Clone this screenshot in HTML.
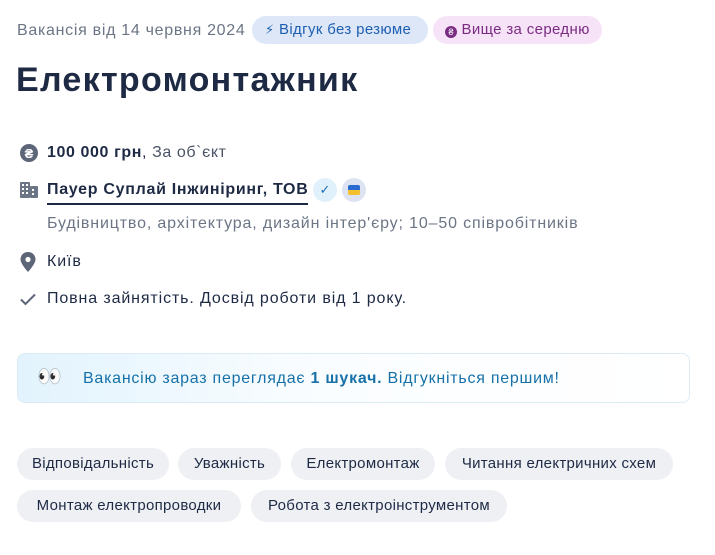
<!DOCTYPE html>
<html><head><meta charset="utf-8"><style>
body{margin:0;width:715px;height:555px;background:#fff;font-family:"Liberation Sans",sans-serif;color:#1e2a44;position:relative;overflow:hidden}
.a{position:absolute;white-space:nowrap}
.pill{position:absolute;height:28px;border-radius:14px;font-size:15px;line-height:28px;padding:0 10px;box-sizing:border-box;white-space:nowrap}
.tag{position:absolute;height:32px;border-radius:16px;background:#eef0f4;font-size:15px;line-height:32px;text-align:center;color:#1e2a44;letter-spacing:0.3px;white-space:nowrap}
.row{position:absolute;left:17px;font-size:16px;line-height:20px;letter-spacing:0.9px;white-space:nowrap}
.ic{position:absolute;left:19px}
</style></head><body>
<div class="a" style="left:17px;top:21px;font-size:16px;color:#6b7585;line-height:20px;letter-spacing:0.7px">Вакансія від 14 червня 2024</div>
<div class="pill" style="left:252px;top:16px;width:176px;background:#dde7f7;color:#1d5fb0;letter-spacing:0.35px;padding-left:13px"><span style="font-size:13px">&#x26A1;&#xFE0E;</span> Відгук без резюме</div>
<div class="pill" style="left:433px;top:16px;width:169px;background:#f7e3f7;color:#7a2c83;letter-spacing:0.35px;padding-left:12px"><span style="display:inline-block;width:12px;height:12px;border-radius:6px;background:#7a2c83;color:#fff;font-size:9px;line-height:12px;text-align:center;vertical-align:-1px;letter-spacing:0">₴</span> Вище за середню</div>
<div class="a" style="left:16px;top:58px;font-size:34px;font-weight:bold;line-height:44px;letter-spacing:1.3px;color:#1e2a44">Електромонтажник</div>

<svg class="ic" style="top:143px" width="20" height="20"><circle cx="10" cy="10" r="9" fill="#5d6678"/><text x="10" y="15" font-size="13" font-weight="bold" fill="#fff" text-anchor="middle" font-family="Liberation Sans">₴</text></svg>
<div class="row" style="left:47px;top:143px;letter-spacing:0.6px"><b>100 000 грн</b>, <span style="color:#4a5466">За об`єкт</span></div>

<svg class="ic" style="top:181px" width="20" height="18" fill="#6b7585"><rect x="1" y="1" width="10" height="16" rx="1"/><rect x="11" y="5" width="8" height="12" rx="1"/><g fill="#fff"><rect x="3" y="3" width="2" height="2"/><rect x="7" y="3" width="2" height="2"/><rect x="3" y="7" width="2" height="2"/><rect x="7" y="7" width="2" height="2"/><rect x="3" y="11" width="2" height="2"/><rect x="7" y="11" width="2" height="2"/><rect x="13" y="8" width="2" height="2"/><rect x="13" y="12" width="2" height="2"/></g></svg>
<div class="row" style="left:47px;top:180px;font-weight:bold;border-bottom:2px solid #1e2a44;padding-bottom:3px;letter-spacing:0.7px">Пауер Суплай Інжиніринг, ТОВ</div>
<div class="a" style="left:313px;top:178px;width:24px;height:24px;border-radius:12px;background:#e1f1fb;color:#1d6fb8;font-size:13px;text-align:center;line-height:24px">✓</div>
<div class="a" style="left:342px;top:178px;width:24px;height:24px;border-radius:12px;background:#dde3f2"><div style="position:absolute;left:6px;top:7px;width:12px;height:5px;background:#2b6ad1;border-radius:2px 2px 0 0"></div><div style="position:absolute;left:6px;top:12px;width:12px;height:5px;background:#f5c02d;border-radius:0 0 2px 2px"></div></div>
<div class="row" style="left:47px;top:214px;color:#6b7585;letter-spacing:0.85px">Будівництво, архітектура, дизайн інтер'єру; 10–50 співробітників</div>

<svg class="ic" style="top:251px" width="18" height="22"><path d="M9 1C4.6 1 1.5 4.2 1.5 8.4 1.5 13 9 21 9 21s7.5-8 7.5-12.6C16.5 4.2 13.4 1 9 1z" fill="#5d6678"/><circle cx="9" cy="8.5" r="2.6" fill="#fff"/></svg>
<div class="row" style="left:47px;top:252px">Київ</div>

<svg class="ic" style="top:290px" width="18" height="18"><path d="M2 9.5l4.5 4.5L16 4.5" stroke="#5d6678" stroke-width="2" fill="none"/></svg>
<div class="row" style="left:47px;top:289px;letter-spacing:0.88px">Повна зайнятість. Досвід роботи від 1 року.</div>

<div class="a" style="left:17px;top:353px;width:673px;height:50px;box-sizing:border-box;border:1px solid #dcecf7;border-radius:8px;background:linear-gradient(90deg,#e2f3fd,#fafdff 45%,#fff)"></div>
<div class="a" style="left:37px;top:366px;font-size:20px;line-height:22px">👀</div>
<div class="a" style="left:83px;top:369px;font-size:16px;line-height:20px;color:#1671a8;letter-spacing:0.75px">Вакансію зараз переглядає <b>1 шукач.</b> Відгукніться першим!</div>

<div class="tag" style="left:17px;top:448px;width:152px">Відповідальність</div>
<div class="tag" style="left:178px;top:448px;width:103px">Уважність</div>
<div class="tag" style="left:291px;top:448px;width:144px">Електромонтаж</div>
<div class="tag" style="left:445px;top:448px;width:228px">Читання електричних схем</div>
<div class="tag" style="left:17px;top:490px;width:224px">Монтаж електропроводки</div>
<div class="tag" style="left:251px;top:490px;width:256px">Робота з електроінструментом</div>
</body></html>
